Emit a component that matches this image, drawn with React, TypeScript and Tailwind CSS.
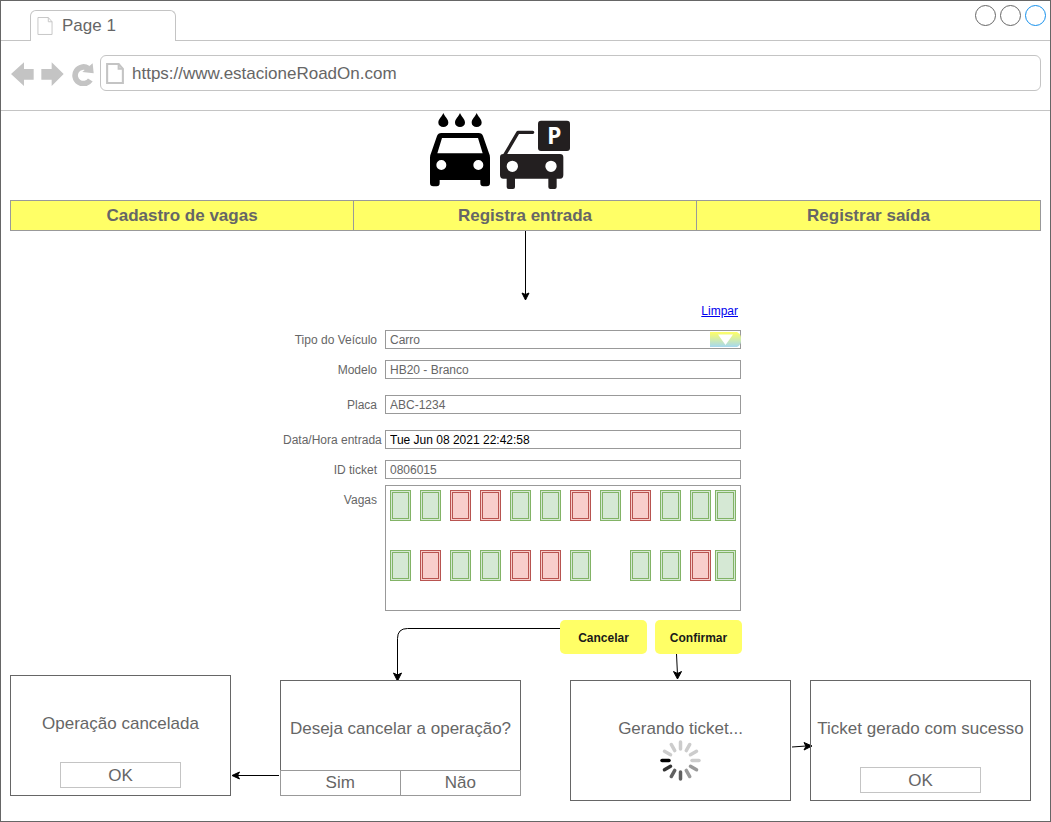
import type { ReactNode } from "react";

function PageIcon({ className, stroke }: { className: string; stroke: number }) {
  return (
    <svg className={className} viewBox="0 0 17 20" fill="none" stroke="#c4c4c4" strokeWidth={stroke} aria-hidden="true">
      <path d="M1 1H12L16 5.500V19H1Z" />
      <path d="M12 1V5.500H16" />
    </svg>
  );
}

function TabStrip() {
  return (
    <div className="flex h-10 items-end justify-between border-b border-[#c4c4c4] pl-[29px]">
      <div className="-mb-px flex h-[31px] w-[146px] items-center rounded-t-md border border-b-0 border-[#c4c4c4] bg-white pl-1.5">
        <PageIcon className="h-5 w-4" stroke={1} />
        <span className="pl-[9px]">Page 1</span>
      </div>
      <div className="flex gap-1 self-start pt-1 pr-1">
        <button aria-label="Minimizar" className="size-[21px] rounded-full border border-[#666666]" />
        <button aria-label="Maximizar" className="size-[21px] rounded-full border border-[#666666]" />
        <button aria-label="Fechar" className="size-[21px] rounded-full border border-[#1590ec]" />
      </div>
    </div>
  );
}

function AddressBar() {
  return (
    <div className="flex h-[70px] items-start border-b border-[#c4c4c4] pt-3.5 pr-[9px] pl-2.5">
      <div className="flex h-9 items-center gap-[7px] pt-px">
        <button aria-label="Voltar">
          <svg className="block h-6 w-[23px]" viewBox="33 186 69 72" fill="#c4c4c4">
            <path d="M33 222L72 187V207H101V239H72V258Z" />
          </svg>
        </button>
        <button aria-label="Avançar">
          <svg className="block h-6 w-[23px]" viewBox="123 186 69 72" fill="#c4c4c4">
            <path d="M191 222L155 187V207H124V239H155V258Z" />
          </svg>
        </button>
        <button aria-label="Recarregar">
          <svg className="block h-6 w-[23px]" viewBox="213 186 69 72">
            <path d="M271 240A25 25 0 1 1 264 205" fill="none" stroke="#c4c4c4" strokeWidth="17" />
            <path d="M278 190L281 220L247 216Z" fill="#c4c4c4" />
          </svg>
        </button>
      </div>
      <label className="ml-1.5 flex h-9 grow items-center rounded-md border border-[#c4c4c4] pl-[5px]">
        <PageIcon className="h-[21px] w-[18px]" stroke={2} />
        <input
          aria-label="Endereço"
          className="min-w-0 grow bg-transparent pt-0.5 pl-2 outline-none"
          defaultValue="https://www.estacioneRoadOn.com"
        />
      </label>
    </div>
  );
}

function Logo() {
  return (
    <div className="flex justify-center pr-[51px] pb-[5px]">
      <svg className="block h-[84px] w-40" viewBox="0 18 480 252" role="img" aria-label="Lavagem e estacionamento">
        <g fill="#000000">
          {[70, 120, 170].map((x) => (
            <path key={x} transform={`translate(${x} 24)`} d="M0 0C4 11 15 18 15 29A15 13 0 0 1 -15 29C-15 18 -4 11 0 0Z" />
          ))}
          <path
            fillRule="evenodd"
            d="M64 84H176Q186 84 189 93L207 145Q210 150 210 158V234Q210 244 200 244H190Q181 244 181 234V225H59V234Q59 244 50 244H40Q30 244 30 234V158Q30 150 33 145L51 93Q54 84 64 84ZM66 99L52 145H188L174 99ZM64 165A15 15 0 1 0 64 195A15 15 0 1 0 64 165ZM175 165A15 15 0 1 0 175 195A15 15 0 1 0 175 165Z"
          />
        </g>
        <g fill="#231f20">
          <path d="M338 82H294L253 152" fill="none" stroke="#231f20" strokeWidth="10" strokeLinecap="round" strokeLinejoin="round" />
          <path
            fillRule="evenodd"
            d="M250 147H420Q430 147 430 157V210Q430 221 420 221H410V246Q410 252 404 252H391Q385 252 385 246V221H285V246Q285 252 279 252H266Q260 252 260 246V221H250Q240 221 240 210V157Q240 147 250 147ZM277 167A17 17 0 1 0 277 201A17 17 0 1 0 277 167ZM393 167A17 17 0 1 0 393 201A17 17 0 1 0 393 167Z"
          />
          <rect x="354" y="47" width="96" height="91" rx="9" />
        </g>
        <text x="403" y="117" textAnchor="middle" fill="#ffffff" className="font-['Noto_Sans',sans-serif] text-[68px] font-bold">
          P
        </text>
      </svg>
    </div>
  );
}

function MainNav() {
  return (
    <nav className="grid h-[31px] grid-cols-3 divide-x divide-[#999999] border border-[#999999] bg-[#ffff66] font-bold">
      {["Cadastro de vagas", "Registra entrada", "Registrar saída"].map((item) => (
        <a key={item} href="#" className="flex items-center justify-center">
          {item}
        </a>
      ))}
    </nav>
  );
}

function Row({ id, label, className, children }: { id: string; label: string; className: string; children: ReactNode }) {
  return (
    <div className={`flex gap-2 ${className}`}>
      <label htmlFor={id} className="w-[94px] pt-px text-right leading-[18px] whitespace-nowrap">
        {label}
      </label>
      {children}
    </div>
  );
}

function TextField({ id, label, value, className, tone }: { id: string; label: string; value: string; className: string; tone: string }) {
  return (
    <Row id={id} label={label} className={className}>
      <input id={id} defaultValue={value} className={`h-[19px] w-[356px] border border-[#999999] px-1 ${tone}`} />
    </Row>
  );
}

const spotRows = ["ggrrggrgrggg", "grggrrg ggrg"];

function SpotMap() {
  return (
    <div id="vagas" className="flex h-[126px] w-[356px] flex-col gap-[29px] border border-[#999999] p-1">
      {spotRows.map((row, r) => (
        <div key={r} className="grid h-[31px] grid-cols-[repeat(10,30px)_25px_21px]">
          {row.split("").map((spot, i) =>
            spot === " " ? (
              <span key={i} />
            ) : (
              <button
                key={i}
                type="button"
                aria-label={`Vaga ${r * 12 + i + 1} ${spot === "g" ? "livre" : "ocupada"}`}
                className={`h-[31px] w-[21px] border-3 border-double ${
                  spot === "g" ? "border-[#82b366] bg-[#d5e8d4]" : "border-[#b85450] bg-[#f8cecc]"
                }`}
              />
            ),
          )}
        </div>
      ))}
    </div>
  );
}

function EntryForm() {
  return (
    <form className="ml-[273px] w-[458px] text-xs" onSubmit={(e) => e.preventDefault()}>
      <div className="flex justify-end pr-[3px]">
        <a href="#" className="leading-5 text-[#0000ee] underline">
          Limpar
        </a>
      </div>
      <Row id="tipo" label="Tipo do Veículo" className="mt-[9px]">
        <div className="relative">
          <select id="tipo" className="block h-[19px] w-[356px] appearance-none border border-[#999999] px-1" defaultValue="Carro">
            <option>Carro</option>
            <option>Moto</option>
          </select>
          <svg className="pointer-events-none absolute top-0.5 right-0 h-[15px] w-[31px]" viewBox="0 0 31 15" aria-hidden="true">
            <defs>
              <linearGradient id="drop" x1="0" y1="0" x2="0" y2="1">
                <stop offset="0" stopColor="#ffff66" />
                <stop offset="1" stopColor="#a5d8f0" />
              </linearGradient>
            </defs>
            <path d="M0 0H27Q31 2 31 6V9Q31 13 27 15H0Z" fill="url(#drop)" />
            <path d="M8 2.500H23L15.500 13Z" fill="#ffffff" />
          </svg>
        </div>
      </Row>
      <TextField id="modelo" label="Modelo" value="HB20 - Branco" className="mt-[11px]" tone="text-[#666666]" />
      <TextField id="placa" label="Placa" value="ABC-1234" className="mt-4" tone="text-[#666666]" />
      <TextField id="data" label="Data/Hora entrada" value="Tue Jun 08 2021 22:42:58" className="mt-4" tone="text-black" />
      <TextField id="ticket" label="ID ticket" value="0806015" className="mt-[11px]" tone="text-[#666666]" />
      <div className="mt-1.5 flex gap-2">
        <span className="w-[94px] pt-1.5 text-right leading-[18px]">Vagas</span>
        <SpotMap />
      </div>
    </form>
  );
}

function Actions() {
  return (
    <div className="mt-[9px] ml-[380px] flex h-[55px] text-xs font-bold text-[#1a1a1a]">
      <svg className="block h-[61px] w-[170px] overflow-visible" viewBox="0 0 170 61" aria-hidden="true">
        <path d="M170 8.500H17.500Q7.500 8.500 7.500 18.500V55" fill="none" stroke="#000" />
        <path d="M7.500 61L3.500 53L7.500 55L11.500 53Z" stroke="#000" strokeLinejoin="round" />
      </svg>
      <button type="button" className="h-[34px] w-[87px] rounded-[5px] bg-[#ffff66] pt-px">
        Cancelar
      </button>
      <div className="ml-2">
        <button type="button" className="block h-[34px] w-[87px] rounded-[5px] bg-[#ffff66] pt-px">
          Confirmar
        </button>
        <svg className="ml-4 block h-[26px] w-3" viewBox="0 1 12 26" aria-hidden="true">
          <path d="M5.500 1L6.500 22" fill="none" stroke="#000" />
          <path d="M6.500 26L2.500 18.500L6.500 20.500L10.500 18.500Z" stroke="#000" strokeLinejoin="round" />
        </svg>
      </div>
    </div>
  );
}

function MessageDialog({ text, className }: { text: string; className: string }) {
  return (
    <section className={`flex h-[121px] w-[221px] flex-col items-center border border-[#666666] pt-[38px] ${className}`}>
      <p className="leading-5 whitespace-nowrap">{text}</p>
      <button className="mt-7 h-[26px] w-[121px] border border-[#c4c4c4]">OK</button>
    </section>
  );
}

const spokes = ["#cccccc", "#cccccc", "#cccccc", "#cccccc", "#999999", "#999999", "#606060", "#606060", "#333333", "#000000", "#cccccc", "#cccccc"];

function Spinner() {
  return (
    <svg className="block size-[41px]" viewBox="-20.500 -20.500 41 41" aria-hidden="true">
      {spokes.map((color, i) => (
        <line key={i} y1="-18.500" y2="-11.500" stroke={color} strokeWidth="3.500" strokeLinecap="round" transform={`rotate(${i * 30})`} />
      ))}
    </svg>
  );
}

function Dialogs() {
  return (
    <div className="flex items-start">
      <MessageDialog text="Operação cancelada" className="" />
      <svg className="mt-[95px] block h-[11px] w-[49px]" viewBox="0 0 49 11" aria-hidden="true">
        <path d="M48 5.500H5" stroke="#000" />
        <path d="M1 5.500L8.500 2L6.500 5.500L8.500 9Z" stroke="#000" strokeLinejoin="round" />
      </svg>
      <section className="mt-[5px] w-[241px]">
        <p className="h-[90px] border border-b-0 border-[#666666] pt-[38px] text-center leading-5 whitespace-nowrap">
          Deseja cancelar a operação?
        </p>
        <div className="grid h-[26px] grid-cols-2 grid-rows-[24px] divide-x divide-[#999999] border border-[#999999]">
          <button className="leading-6">Sim</button>
          <button className="leading-6">Não</button>
        </div>
      </section>
      <section className="mt-[5px] ml-[49px] flex h-[121px] w-[221px] flex-col items-center border border-[#666666] pt-[38px]">
        <p className="leading-5">Gerando ticket...</p>
        <div className="pt-px">
          <Spinner />
        </div>
      </section>
      <svg className="mt-[66px] block h-[11px] w-[19px] overflow-visible" viewBox="0 0 19 11" aria-hidden="true">
        <path d="M1 6L15 5" stroke="#000" />
        <path d="M21 5L13 1.500L15 5.200L13 9Z" stroke="#000" strokeLinejoin="round" />
      </svg>
      <MessageDialog text="Ticket gerado com sucesso" className="mt-[5px]" />
    </div>
  );
}

export default function App() {
  return (
    <div className="min-h-screen border border-[#666666] bg-white font-['Liberation_Sans',Arial,sans-serif] text-[17px] text-[#666666]">
      <TabStrip />
      <AddressBar />
      <main className="px-[9px]">
        <Logo />
        <MainNav />
        <div className="mx-auto w-fit pr-2.5">
          <svg className="ml-[510px] block h-[70px] w-[11px]" viewBox="0 0 11 70" aria-hidden="true">
            <path d="M5.500 0V64" stroke="#000" />
            <path d="M5.500 69L2 62L5.500 63.500L9 62Z" stroke="#000" strokeLinejoin="round" />
          </svg>
          <EntryForm />
          <Actions />
          <Dialogs />
        </div>
      </main>
    </div>
  );
}
